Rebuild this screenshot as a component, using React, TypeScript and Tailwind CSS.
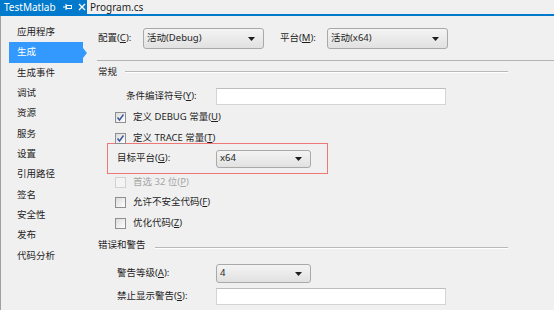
import React from 'react'

const font = { fontFamily: '"Segoe UI", "Noto Sans", "Noto Sans CJK SC", sans-serif' }

const navItems = [
    '应用程序',
    '生成',
    '生成事件',
    '调试',
    '资源',
    '服务',
    '设置',
    '引用路径',
    '签名',
    '安全性',
    '发布',
    '代码分析',
]

const Caret = () => (
    <svg width="7" height="4" viewBox="0 0 7 4" className="shrink-0">
        <path d="M0 0 H7 L3.5 4 Z" fill="#1e1e1e" />
    </svg>
)

const Dropdown = ({ value, className }: { value: string; className: string }) => (
    <div
        className={`flex items-center justify-between rounded-[3px] border border-[#a9a9a9] bg-gradient-to-b from-[#f4f4f4] to-[#e1e1e1] pl-[3px] pr-[8px] text-[9.5px] text-[#1e1e1e] ${className}`}
    >
        <span>{value}</span>
        <Caret />
    </div>
)

const TextBox = ({ className }: { className: string }) => (
    <div className={`border border-[#d4d4d4] border-t-[#bdbdbd] bg-white ${className}`} />
)

const CheckBox = ({
    label,
    checked = false,
    disabled = false,
}: {
    label: React.ReactNode
    checked?: boolean
    disabled?: boolean
}) => (
    <div className="flex h-[14px] items-center gap-[7px] pl-[18px]">
        <div
            className={`flex h-[11px] w-[11px] items-center justify-center border ${
                disabled
                    ? 'border-[#d2d2d2] bg-[#f4f4f4]'
                    : 'border-[#8f8f8f] bg-gradient-to-br from-[#dcdcdc] to-[#ffffff]'
            }`}
        >
            {checked && (
                <svg width="9" height="9" viewBox="0 0 9 9">
                    <path d="M1.5 4.5 L3.5 7 L7.5 1.5" fill="none" stroke="#3d5a9c" strokeWidth="1.5" />
                </svg>
            )}
        </div>
        <span className={`text-[9.5px] ${disabled ? 'text-[#a6a6a6]' : 'text-[#1e1e1e]'}`}>{label}</span>
    </div>
)

export default function App() {
    return (
        <div className="h-[310px] w-[554px] overflow-hidden bg-[#f0f0f0] text-[#1e1e1e]" style={font}>
            {/* document tabs */}
            <div className="flex h-[14px] items-center bg-[#f0f0f0] text-[10px] leading-[14px]">
                <div className="flex h-full w-[87px] items-center bg-[#007acc] pl-[4px] text-white">
                    <span>TestMatlab</span>
                    <svg width="9" height="8" viewBox="0 0 9 8" className="ml-[7px]">
                        <path d="M0 4 H3 M3 1 V7" stroke="#fff" strokeWidth="1" fill="none" />
                        <rect x="3.5" y="2.5" width="5" height="3" fill="none" stroke="#fff" strokeWidth="1" />
                    </svg>
                    <svg width="8" height="8" viewBox="0 0 8 8" className="ml-[6px]">
                        <path d="M1 1 L7 7 M7 1 L1 7" stroke="#fff" strokeWidth="1.4" />
                    </svg>
                </div>
                <span className="pl-[3px] text-[#1e1e1e]">Program.cs</span>
            </div>
            <div className="h-[2px] bg-[#007acc]" />

            <div className="flex h-[294px] border-l border-[#a0a0a0]">
                {/* side nav */}
                <div className="w-[96px] pt-[6px]">
                    {navItems.map((item) =>
                        item === '生成' ? (
                            <div key={item} className="relative ml-[8px] flex h-[20.35px] w-[74px] items-center bg-[#3399ff] pl-[8px] text-[9.5px] text-white">
                                {item}
                                <div className="absolute right-[-4px] top-1/2 h-0 w-0 -translate-y-1/2 border-y-[5px] border-l-[4px] border-y-transparent border-l-[#3399ff]" />
                            </div>
                        ) : (
                            <div key={item} className="flex h-[20.35px] items-center pl-[16px] text-[9.5px]">
                                {item}
                            </div>
                        ),
                    )}
                </div>

                {/* settings */}
                <div className="flex-1 pt-[12px] text-[9.5px]">
                    <div className="flex h-[21px] items-center">
                        <span className="w-[46px] pl-[1px]">
                            配置(<u>C</u>):
                        </span>
                        <Dropdown value="活动(Debug)" className="h-[21px] w-[121px]" />
                        <span className="ml-[16px] w-[47px]">
                            平台(<u>M</u>):
                        </span>
                        <Dropdown value="活动(x64)" className="h-[21px] w-[121px]" />
                    </div>

                    <div className="mt-[11px] h-px bg-[#b4b4b4]" />

                    <div className="mt-[3px] flex h-[16px] items-start">
                        <span className="w-[28px] pl-[1px] leading-[16px]">常规</span>
                        <div className="mt-[7px] h-[2px] w-[383px] bg-gradient-to-b from-[#b9b9b9] from-50% to-white to-50%" />
                    </div>

                    <div className="mt-[8px] flex h-[17px] items-center">
                        <span className="w-[119px] pl-[29px]">
                            条件编译符号(<u>Y</u>):
                        </span>
                        <TextBox className="h-[17px] w-[230px]" />
                    </div>

                    <div className="mt-[5px]">
                        <CheckBox checked label={<>定义 DEBUG 常量(<u>U</u>)</>} />
                    </div>
                    <div className="mt-[7px]">
                        <CheckBox checked label={<>定义 TRACE 常量(<u>T</u>)</>} />
                    </div>

                    {/* highlighted target platform */}
                    <div className="ml-[10px] mt-[-2px] h-[31px] w-[221px] bg-[#ee7878] p-px">
                        <div className="flex h-full items-center bg-[#f0f0f0] pl-[9px]">
                            <span className="w-[99px]">
                                目标平台(<u>G</u>):
                            </span>
                            <Dropdown value="x64" className="h-[18px] w-[95px]" />
                        </div>
                    </div>

                    <div className="mt-[1px]">
                        <CheckBox disabled label={<>首选 32 位(<u>P</u>)</>} />
                    </div>
                    <div className="mt-[6px]">
                        <CheckBox label={<>允许不安全代码(<u>F</u>)</>} />
                    </div>
                    <div className="mt-[7px]">
                        <CheckBox label={<>优化代码(<u>Z</u>)</>} />
                    </div>

                    <div className="mt-[7px] flex h-[16px] items-start">
                        <span className="w-[58px] pl-[1px] leading-[16px]">错误和警告</span>
                        <div className="mt-[10px] h-[2px] w-[353px] bg-gradient-to-b from-[#b9b9b9] from-50% to-white to-50%" />
                    </div>

                    <div className="mt-[11px] flex h-[19px] items-center">
                        <span className="w-[119px] pl-[20px]">
                            警告等级(<u>A</u>):
                        </span>
                        <Dropdown value="4" className="h-[19px] w-[95px]" />
                    </div>

                    <div className="mt-[5px] flex h-[17px] items-center">
                        <span className="w-[119px] pl-[20px]">
                            禁止显示警告(<u>S</u>):
                        </span>
                        <TextBox className="h-[17px] w-[230px]" />
                    </div>
                </div>
            </div>
        </div>
    )
}
